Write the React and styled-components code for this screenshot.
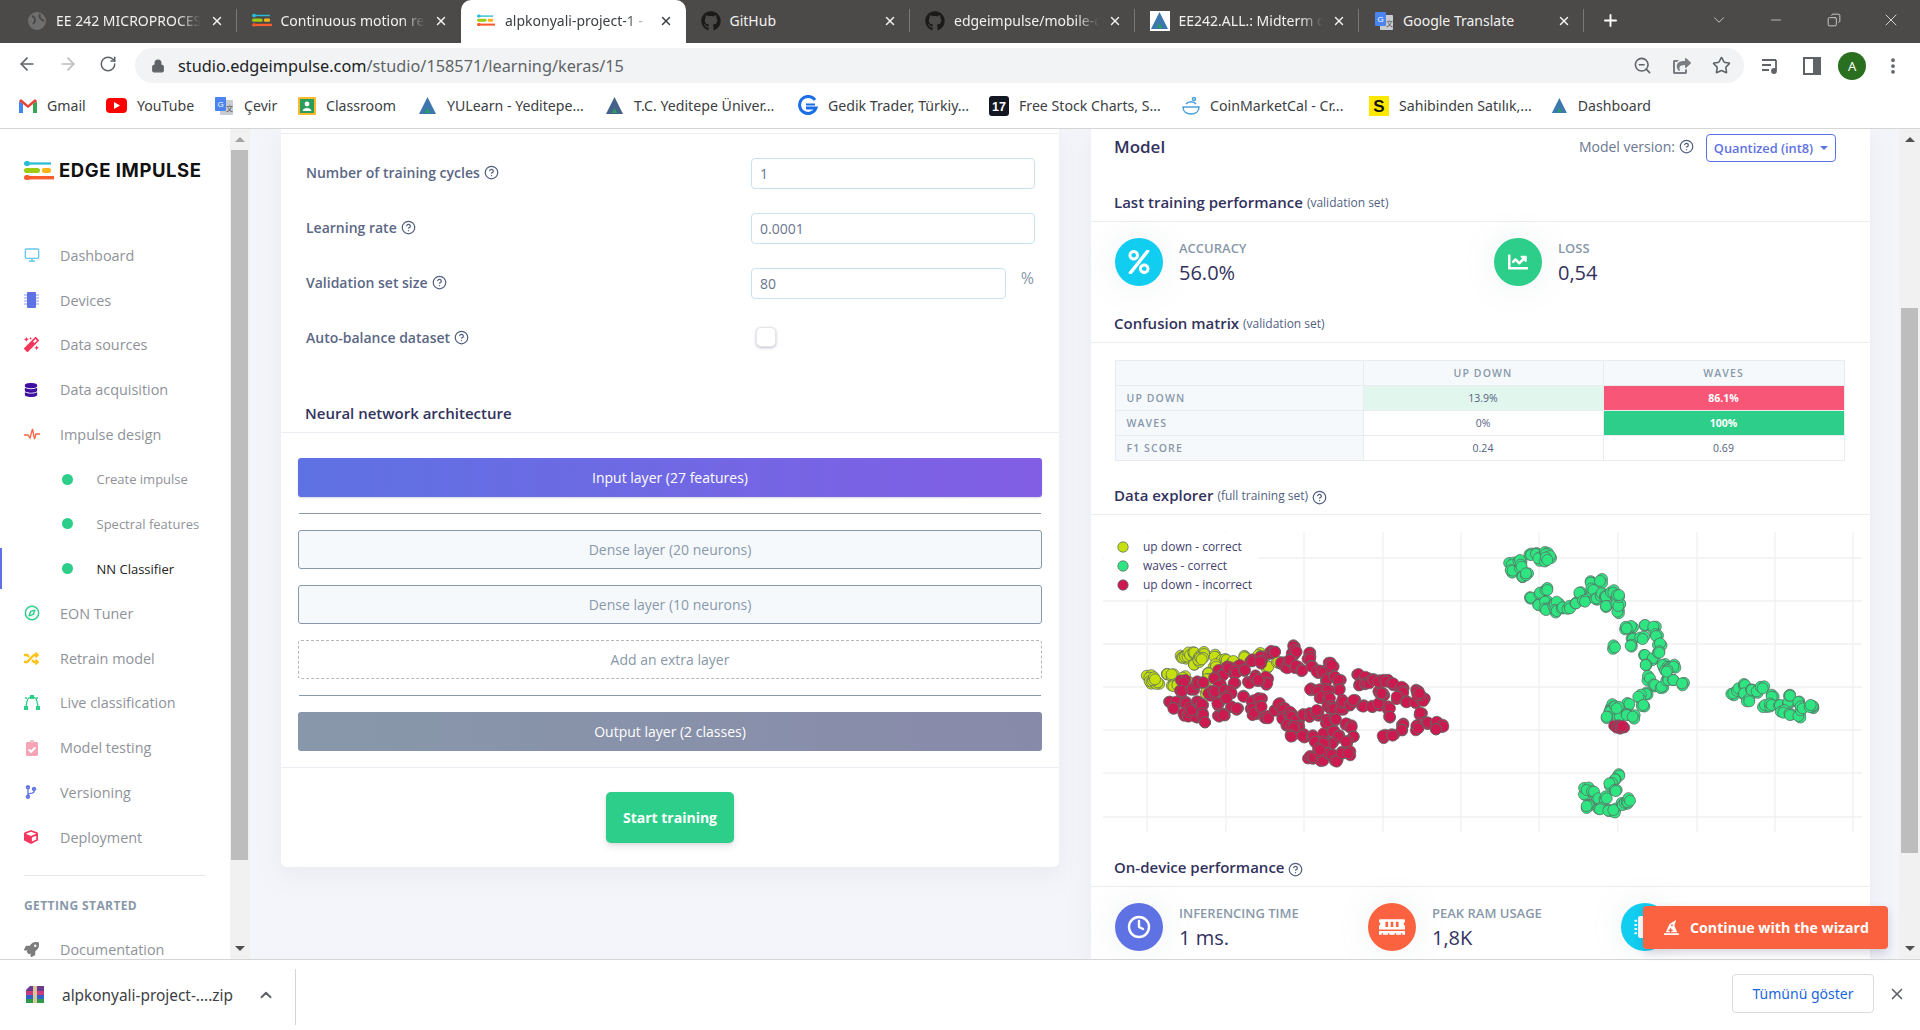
import React from 'react';
import styled, { createGlobalStyle } from 'styled-components';
import { ArrowLeft, ArrowRight, RotateCw, Lock, ZoomOut, Star, MoreVertical, X, Plus, ChevronDown, ChevronUp, Minus, Copy, Monitor, Clock, HelpCircle, Compass } from 'lucide-react';
import { FaDatabase, FaRandom, FaMagic, FaCodeBranch, FaClipboardCheck, FaCube, FaRocket, FaGithub, FaMicrochip, FaShareSquare, FaHatWizard, FaPercent, FaChartLine, FaMemory } from 'react-icons/fa';

const Global = createGlobalStyle`
  html, body { margin: 0; padding: 0; height: 100%; overflow: hidden; background: #fff; }
  body { font-family: "Open Sans", "Noto Sans", sans-serif; }
  * { box-sizing: border-box; }
`;

const Window = styled.div`
  width: 1920px; height: 1030px; display: flex; flex-direction: column; overflow: hidden; position: relative;
`;
const TabStrip = styled.div`
  height: 43px; flex: none; background: #4c4a48; display: flex; align-items: flex-end; padding-left: 12px; color: #fff;
  font-family: "Noto Sans", sans-serif; font-size: 14px;
`;
const Tab = styled.div`
  width: 224.5px; height: 43px; flex: none; display: flex; align-items: center; padding: 0 13px 2px 15px; gap: 9px;
  background: ${p => p.$active ? '#fff' : 'transparent'};
  color: ${p => p.$active ? '#3c4043' : '#f1f1f1'};
  border-radius: ${p => p.$active ? '10px 10px 0 0' : '0'};
  position: relative;
  &::after { content: ''; position: absolute; right: 0; top: 9px; bottom: 11px; width: 1px; background: ${p => p.$sep ? '#7a7876' : 'transparent'}; }
`;
const TabIcon = styled.span`
  width: 20px; height: 20px; flex: none; display: flex; align-items: center; justify-content: center; background: ${p => p.$plate ? '#fff' : 'transparent'};
`;
const TabLabel = styled.span`
  flex: 1; min-width: 0; white-space: nowrap;
  ${p => !p.$plain && `
    -webkit-mask-image: linear-gradient(90deg, #000 84%, transparent 100%);
    mask-image: linear-gradient(90deg, #000 84%, transparent 100%);
  `}
`;
const NewTab = styled.div`
  margin-left: 17px; height: 43px; display: flex; align-items: center; padding-bottom: 2px;
`;
const WindowControls = styled.div`
  margin-left: auto; display: flex; align-items: center; height: 43px; padding-bottom: 4px; color: #ececec; gap: 0;
`;
const WinBtn = styled.span`
  width: 57.5px; display: flex; justify-content: center;
`;
const ToolBar = styled.div`
  height: 42px; flex: none; background: #fff; display: flex; align-items: center; padding: 0 0 0 17px; color: #5f6368;
`;
const NavBtn = styled.span`
  width: ${p => p.$w || 41}px; flex: none; display: flex; justify-content: ${p => p.$c ? 'center' : 'flex-start'}; color: ${p => p.$dim ? '#b9bbbe' : '#5f6368'};
`;
const Omnibox = styled.div`
  width: 1609px; height: 35px; margin: 3px 0 0 17px; flex: none; background: #f1f3f4; border-radius: 18px; display: flex; align-items: center; padding: 0 13px 0 16px;
  font-family: "Noto Sans", sans-serif; font-size: 16.3px; color: #5f6368;
`;
const Url = styled.span`
  flex: 1; margin-left: 13px; b { font-weight: 400; color: #202124; }
`;
const OmniIcons = styled.div`
  display: flex; gap: 21px; align-items: center; color: #5f6368;
`;
const ToolEnd = styled.div`
  flex: 1; display: grid; grid-template-columns: repeat(4, 40.7px); justify-items: center; align-items: center; padding: 3px 0 0 6.5px;
`;
const Avatar = styled.span`
  width: 28px; height: 28px; border-radius: 50%; background: #2a6f1f; color: #fff; display: flex; align-items: center; justify-content: center;
  font-family: "Noto Sans", sans-serif; font-size: 13px;
`;
const BookmarkBar = styled.div`
  height: 44px; flex: none; background: #fff; border-bottom: 1px solid #d5d5d5; display: flex; align-items: center; padding: 0 0 2px 19px;
`;
const Bookmark = styled.div`
  width: ${p => p.$w}px; flex: none; display: flex; align-items: center; gap: 10px; font-family: "Noto Sans", sans-serif; font-size: 14.15px; color: #3c4043; white-space: nowrap;
`;
const Viewport = styled.div`
  flex: 1; min-height: 0; display: flex; position: relative; background: #f4f5fa;
`;
const Sidebar = styled.aside`
  width: 230px; flex: none; background: #fff; overflow: hidden; padding-top: 29px; position: relative;
`;
const Brand = styled.div`
  display: flex; align-items: center; gap: 5px; padding-left: 24px; height: 24px; margin-bottom: 51px;
`;
const BrandText = styled.span`
  font-family: "Inter", sans-serif; font-weight: 700; font-size: 18.5px; letter-spacing: 0.55px; color: #111;
`;
const NavItem = styled.div`
  height: ${p => p.$tail ? 20 : 44.75}px; display: flex; align-items: center; padding-left: ${p => p.$sub ? 61.5 : 24}px; gap: ${p => p.$sub ? 24 : 0}px;
  font-size: ${p => p.$sub ? 13 : 14.4}px; color: ${p => p.$active ? '#222' : '#8f9299'}; position: relative;
  &::before { content: ''; display: ${p => p.$active ? 'block' : 'none'}; position: absolute; left: 0; top: 2px; bottom: 2px; width: 2px; background: #5e72e4; }
`;
const NavIcon = styled.span`
  width: 36px; flex: none; display: flex; align-items: center; color: ${p => p.$c}; font-size: 15px;
`;
const SubDot = styled.span`
  width: 11px; height: 11px; border-radius: 50%; background: #2dce89; flex: none;
`;
const NavDivider = styled.div`
  height: 1px; background: #e6e6e8; margin: 15px 24px 0 24px;
`;
const NavHeading = styled.div`
  font-size: 12px; font-weight: 700; letter-spacing: 0.4px; color: #8898aa; padding: 22px 0 26px 24px; line-height: 16px;
`;
const Track = styled.div`
  width: ${p => p.$w}px; flex: none; background: #f1f1f1; display: flex; flex-direction: column; align-items: center; padding: 0 2px 0 ${p => p.$pl}px;
`;
const ScrollArrow = styled.div`
  height: 21px; width: 100%; flex: none; display: flex; align-items: center; justify-content: center;
  &::before { content: ''; border-left: 5px solid transparent; border-right: 5px solid transparent; ${p => p.$down ? 'border-top: 5px solid #505050;' : `border-bottom: 5px solid ${p.$dark ? '#505050' : '#a3a3a3'};`} }
`;
const Thumb = styled.div`
  width: 100%; height: ${p => p.$h}px; margin-top: ${p => p.$top}px; flex: none; background: #bdbdbd;
`;
const TrackGap = styled.div`flex: 1;`;
const Content = styled.main`
  flex: 1; min-width: 0; overflow: hidden; display: grid; grid-template-columns: 778px 779px; column-gap: 32px; align-items: start; padding-left: 31px;
  color: #525f7f;
`;
const Card = styled.section`
  background: #fff; border-radius: 0 0 6px 6px; box-shadow: 0 8px 24px rgba(140,152,164,.10);
`;
const CardLead = styled.div`
  height: 5px; border-bottom: 1px solid #ebedf2;
`;
const Form = styled.div`
  padding: 24px 25px 0 25px; display: flex; flex-direction: column; gap: 24px;
`;
const FormRow = styled.div`
  display: grid; grid-template-columns: 445px 1fr; align-items: center; height: 31px;
`;
const FieldLabel = styled.label`
  font-size: 14px; font-weight: 600; color: #5b6785; display: flex; align-items: center; gap: 4px; margin-top: -2px;
`;
const Help = styled(HelpCircle)`
  flex: none; color: #525f7f;
`;
const InputWrap = styled.div`
  display: flex; align-items: flex-start; justify-content: space-between;
`;
const TextInput = styled.div`
  width: ${p => p.$w || 284}px; height: 31px; border: 1px solid #c9e2f3; border-radius: 4px; padding: 0 8px; display: flex; align-items: center; font-size: 14px; color: #6b7690; background: #fff;
`;
const Unit = styled.span`
  font-size: 16px; color: #8898aa; margin: -1px 0 0 0;
`;
const CheckBox = styled.div`
  width: 20px; height: 20px; margin: -4px 0 0 5px; border-radius: 5px; background: #fff; border: 1px solid #e4e6ea; box-shadow: 0 1px 3px rgba(50,50,93,.3);
`;
const SectionHead = styled.div`
  height: ${p => p.$h}px; display: flex; align-items: flex-end; gap: 4px; padding: 0 25px 9px ${p => p.$pl || 23}px; border-bottom: 1px solid #ebedf2; line-height: 20px;
  font-size: 15px; font-weight: 600; color: #32325d;
`;
const Note = styled.small`
  font-size: 12px; font-weight: 400; color: #525f7f; line-height: 20px; margin-bottom: -1px;
`;
const Layers = styled.div`
  padding: 25px 17px 16px 17px; display: flex; flex-direction: column; gap: 16px; border-bottom: 1px solid #ebedf2;
`;
const Layer = styled.div`
  height: 39px; border-radius: 3px; display: flex; align-items: center; justify-content: center; font-size: 14px;
  ${p => p.$kind === 'input' && 'background: linear-gradient(87deg, #5e72e4, #825ee4); color: #fff; font-weight: 500; box-shadow: 0 1px 2px rgba(50,50,93,.2);'}
  ${p => p.$kind === 'output' && 'background: linear-gradient(87deg, #8898aa, #888aaa); color: #fff; font-weight: 500;'}
  ${p => p.$kind === 'dense' && 'background: #f6f9fc; border: 1px solid #8898aa; color: #8898aa;'}
  ${p => p.$kind === 'add' && 'background: #fff; border: 1px dashed #b5b8bd; color: #8898aa;'}
`;
const Rule = styled.hr`
  margin: 0 1px; border: 0; height: 1px; background: #8898aa;
`;
const Actions = styled.div`
  display: flex; justify-content: center; padding: 24px 0;
`;
const StartButton = styled.button`
  width: 128px; height: 51px; border: 0; border-radius: 5px; background: #2dce89; color: #fff; font: 700 14px "Open Sans", sans-serif; box-shadow: 0 4px 6px rgba(50,50,93,.11), 0 1px 3px rgba(0,0,0,.08);
`;
const ModelHead = styled.div`
  height: 33px; padding: 5px 34px 0 23px; display: flex; align-items: center; justify-content: space-between;
`;
const ModelTitle = styled.h2`
  margin: -2px 0 0 0; font-size: 17px; font-weight: 600; color: #32325d; line-height: 28px;
`;
const VersionGroup = styled.div`
  display: flex; align-items: center; gap: 4px; font-size: 14px; color: #6b7690;
`;
const VersionText = styled.span`
  display: flex; align-items: center; gap: 4px; margin-top: -3px;
`;
const VersionSelect = styled.div`
  width: 130px; height: 28px; margin-left: 8px; border: 1px solid #5e72e4; border-radius: 4px; color: #5e72e4; font-size: 12.8px; font-weight: 600; display: flex; align-items: center; justify-content: center; gap: 7px;
  &::after { content: ''; border-left: 4px solid transparent; border-right: 4px solid transparent; border-top: 4.5px solid #5e72e4; }
`;
const StatRow = styled.div`
  display: grid; grid-template-columns: ${p => p.$cols}; padding: 16px 0 ${p => p.$pb || 0}px 24px;
`;
const Stat = styled.div`
  display: flex; gap: 15px; align-items: center; height: 48px;
`;
const StatIcon = styled.span`
  width: 48px; height: 48px; border-radius: 50%; background: ${p => p.$c}; color: #fff; flex: none; display: flex; align-items: center; justify-content: center; box-shadow: 0 0 32px rgba(136,152,170,.15);
`;
const StatText = styled.div`
  display: flex; flex-direction: column; gap: 1px; padding: 1px 0 0 1px;
`;
const StatLabel = styled.span`
  font-size: 13px; font-weight: 600; color: #8898aa; line-height: 19px; white-space: nowrap;
`;
const StatValue = styled.span`
  font-size: 20px; font-weight: 500; color: #32325d; line-height: 28px;
`;
const Matrix = styled.table`
  width: 729px; margin: 17px 0 0 23.5px; border-collapse: collapse; table-layout: fixed; font-size: 10.5px; color: #525f7f;
  td, th { border: 1px solid #e9ecef; height: 25px; padding: 0; text-align: center; font-weight: 400; }
`;
const MatrixHead = styled.th`
  background: #f6f9fc; color: #8898aa; letter-spacing: 1.1px; text-align: ${p => p.$left ? 'left' : 'center'} !important; padding-left: ${p => p.$left ? 11 : 0}px !important;
  font-weight: 600 !important; font-size: 10.5px;
`;
const Cell = styled.td`
  background: ${p => p.$bg || '#fff'}; color: ${p => p.$fg || '#525f7f'}; font-weight: ${p => p.$fg ? 700 : 400} !important;
`;
const Plot = styled.svg`
  display: block; width: 779px; height: 335px;
`;
const LegendText = styled.text`
  font: 12px "Open Sans", sans-serif; fill: #44446e;
`;
const Wizard = styled.div`
  position: absolute; left: 1643px; top: 777px; width: 245px; height: 43px; border-radius: 4px; background: #fb6340; color: #fff; display: flex; align-items: center; gap: 11px; padding-left: 21px; font-size: 14.2px; font-weight: 700; box-shadow: 0 4px 10px rgba(50,50,93,.2); white-space: nowrap;
`;
const Shelf = styled.footer`
  height: 71px; flex: none; background: #fff; border-top: 1px solid #d5d5d5; display: flex; align-items: center; padding-left: 25px; font-family: "Noto Sans", sans-serif; font-size: 15.4px; color: #3c4043;
`;
const ShelfFile = styled.span`
  margin-left: 17px; width: 195px; white-space: nowrap;
`;
const ShelfDivider = styled.span`
  width: 1px; height: 56px; background: #d5d5d5; margin: 4px 0 0 20px;
`;
const ShowAll = styled.div`
  margin-left: auto; width: 142px; height: 39px; margin-bottom: 4px; border: 1px solid #dadce0; border-radius: 4px; display: flex; align-items: center; justify-content: center; color: #1a66e0; font-size: 14px;
`;
const ShelfClose = styled.span`
  width: 46px; flex: none; display: flex; justify-content: center; color: #5f6368; margin-bottom: 2px;
`;

const EILogo = ({ s = 1 }) => (
  <svg width={30 * s} height={21 * s} viewBox="0 0 30 21">
    <rect x="0" y="1" width="6" height="5" rx="2.5" fill="#27bcd6" /><rect x="3" y="2.4" width="24" height="2.2" fill="#27bcd6" />
    <rect x="0" y="8" width="16" height="5" rx="2.5" fill="#9ccb0f" /><rect x="18" y="8" width="9" height="5" rx="2" fill="#fcb316" />
    <rect x="0" y="15" width="6" height="5" rx="2.5" fill="#fb5a2c" /><rect x="3" y="16" width="27" height="3.4" fill="#fb5a2c" />
  </svg>
);
const Triangle = ({ c = '#3c78ae' }) => (
  <svg width="19" height="20" viewBox="0 0 19 20">
    <path d="M9.5 1 L18 18 H1 Z" fill={c} /><path d="M9.5 12 L12 17 H7 Z" fill="#27a25a" />
  </svg>
);
const Translate = () => (
  <svg width="20" height="20" viewBox="0 0 20 20">
    <rect x="6" y="4" width="13" height="15" rx="1" fill="#c9ccd1" /><rect x="1" y="1" width="11" height="14" rx="1" fill="#4b84ee" />
    <text x="3.5" y="11" fontSize="8" fill="#fff" fontFamily="Liberation Sans">G</text><text x="12" y="15" fontSize="7" fill="#555" fontFamily="Noto Sans CJK JP">文</text>
  </svg>
);
const Gmail = () => (
  <svg width="18" height="14" viewBox="0 0 18 14">
    <path d="M0 2 V14 H4 V5 Z" fill="#4285f4" /><path d="M18 2 V14 H14 V5 Z" fill="#34a853" /><path d="M0 2 L2 0 L9 6 L16 0 L18 2 L9 9 Z" fill="#ea4335" />
  </svg>
);
const Youtube = () => (
  <svg width="21" height="15" viewBox="0 0 21 15"><rect width="21" height="15" rx="4" fill="#f00" /><path d="M8 4 L14 7.5 L8 11 Z" fill="#fff" /></svg>
);
const Classroom = () => (
  <svg width="18" height="18" viewBox="0 0 18 18"><rect width="18" height="18" rx="1" fill="#f9bb2d" /><rect x="2" y="2" width="14" height="14" fill="#2a9d5c" /><circle cx="9" cy="7" r="2.4" fill="#fff" /><path d="M4.5 14 C5 10 13 10 13.500 14 Z" fill="#fff" /></svg>
);
const GLogo = () => (
  <svg width="20" height="21" viewBox="0 0 20 21" fill="none" stroke="#1a6ee8" strokeWidth="3"><path d="M17 5 A8.500 8.500 0 1 0 18 13 H8" /><path d="M8 9.500 H17" strokeWidth="2" /></svg>
);
const TvLogo = () => (
  <svg width="20" height="20" viewBox="0 0 20 20"><rect width="20" height="20" rx="3" fill="#131722" /><text x="10" y="15" textAnchor="middle" fontSize="12.500" fontWeight="700" fill="#fff" fontFamily="Liberation Sans">17</text></svg>
);
const CoinCal = () => (
  <svg width="18" height="19" viewBox="0 0 18 19" fill="none" stroke="#4d9fd8" strokeWidth="1.500"><path d="M1 11 H17 C17 16 13 18 9 18 C5 18 1 16 1 11 Z" /><path d="M4 8 C6 5 12 5 14 8" /><circle cx="12" cy="3" r="1.500" /></svg>
);
const SLogo = () => (
  <svg width="20" height="20" viewBox="0 0 20 20"><rect width="20" height="20" fill="#ffe800" /><text x="10" y="16" textAnchor="middle" fontSize="17" fontWeight="700" fill="#111" fontFamily="Liberation Sans">S</text></svg>
);
const Rar = () => (
  <svg width="20" height="20" viewBox="0 0 20 20"><path d="M1 5 L5 1 H19 V6 H1 Z" fill="#6a3a8e" /><rect x="1" y="6" width="18" height="4" fill="#c83a7c" /><rect x="1" y="10" width="18" height="4" fill="#2f62c8" /><rect x="1" y="14" width="18" height="4" fill="#2f9a4a" /><rect x="8" y="1" width="4" height="17" fill="#d8c79a" /></svg>
);

const tabs = [
  { icon: <svg width="18" height="18" viewBox="0 0 18 18"><circle cx="9" cy="9" r="9" fill="#6f6f6f" /><path d="M4 4 C8 6 8 9 5 12 M12 2 C10 6 14 8 16 9" stroke="#4c4a48" strokeWidth="2" fill="none" /></svg>, label: 'EE 242 MICROPROCES', sep: true },
  { icon: <EILogo s={0.68} />, label: 'Continuous motion re', sep: false },
  { icon: <EILogo s={0.6} />, label: 'alpkonyali-project-1 -', active: true },
  { icon: <FaGithub size={20} color="#1a1a1a" />, label: 'GitHub', sep: true, plain: true },
  { icon: <FaGithub size={20} color="#1a1a1a" />, label: 'edgeimpulse/mobile-c', sep: true },
  { icon: <Triangle />, label: 'EE242.ALL.: Midterm c', sep: true, plate: true },
  { icon: <Translate />, label: 'Google Translate', sep: true, plain: true },
];
const bookmarks = [
  [<Gmail />, 'Gmail', 87], [<Youtube />, 'YouTube', 108], [<Translate />, 'Çevir', 84], [<Classroom />, 'Classroom', 120],
  [<Triangle />, 'YULearn - Yeditepe...', 187], [<Triangle c="#44618a" />, 'T.C. Yeditepe Üniver...', 193], [<GLogo />, 'Gedik Trader, Türkiy...', 191],
  [<TvLogo />, 'Free Stock Charts, S...', 193], [<CoinCal />, 'CoinMarketCal - Cr...', 187], [<SLogo />, 'Sahibinden Satılık,...', 182], [<Triangle />, 'Dashboard', 100],
];
const Chip = () => (
  <svg width="15" height="16" viewBox="0 0 15 16"><rect x="3" y="0" width="9" height="16" rx="1" fill="#5e72e4" /><path d="M0 3 H3 M0 6 H3 M0 9 H3 M0 12 H3 M12 3 H15 M12 6 H15 M12 9 H15 M12 12 H15" stroke="#8e9bec" strokeWidth="1" /></svg>
);
const Pulse = () => (
  <svg width="16" height="12" viewBox="0 0 16 12" fill="none" stroke="#fb6340" strokeWidth="1.300"><path d="M0 7 H4 L6 10 L8.500 1 L10.500 11 L12 6 H16" /></svg>
);
const Spline = () => (
  <svg width="16" height="15" viewBox="0 0 16 15" fill="none" stroke="#2dce89" strokeWidth="1.300"><path d="M2 12 C3 3 5 2 8 2 C11 2 13 3 14 12" /><path d="M1 3 H15" strokeDasharray="2 9" /><rect x="0" y="11" width="4" height="4" fill="#2dce89" stroke="none" /><rect x="12" y="11" width="4" height="4" fill="#2dce89" stroke="none" /><rect x="6" y="0" width="4" height="4" fill="#2dce89" stroke="none" /></svg>
);
const navTop = [
  [<Monitor size={16} />, '#65c8f0', 'Dashboard'], [<Chip />, '#5e72e4', 'Devices'], [<FaMagic size={15} />, '#f5365c', 'Data sources'],
  [<FaDatabase size={14} />, '#3f0f9f', 'Data acquisition'], [<Pulse />, '#fb6340', 'Impulse design'],
];
const navBottom = [
  [<Compass size={16} strokeWidth={2.2} />, '#2dce89', 'EON Tuner'], [<FaRandom size={15} />, '#fcc419', 'Retrain model'], [<Spline />, '#2dce89', 'Live classification'],
  [<FaClipboardCheck size={16} />, '#f6a4b5', 'Model testing'], [<FaCodeBranch size={14} />, '#5e72e4', 'Versioning'], [<FaCube size={14} />, '#f5365c', 'Deployment'],
];

const yellow = [[178,473],[185,485],[203,487],[195,478],[232,462],[245,463],[250,498],[262,495],[278,473],[275,413],[285,410],[300,405],[313,398],[328,410],[342,402],[312,434],[325,420],[335,418],[374,410],[395,420],[410,420],[430,423],[378,440],[355,460],[350,478],[395,470],[463,412],[505,405],[535,440],[565,425],[350,512],[300,490],[535,400]];
const crimson = [[280,487],[276,513],[308,505],[325,490],[340,487],[385,450],[400,465],[372,475],[385,498],[415,445],[450,435],[440,458],[465,450],[432,488],[487,424],[512,410],[510,425],[478,490],[495,472],[527,470],[532,490],[505,480],[545,400],[555,396],[573,428],[592,445],[610,380],[605,400],[620,395],[600,420],[618,437],[637,452],[658,398],[660,418],[665,440],[680,455],[700,458],[722,428],[725,435],[712,480],[735,470],[745,480],[748,510],[660,508],[685,515],[712,512],[695,530],[720,535],[240,545],[258,545],[288,550],[250,565],[280,580],[295,590],[315,590],[305,570],[325,545],[335,552],[340,585],[345,607],[382,550],[388,590],[400,585],[355,520],[375,515],[405,510],[425,520],[425,560],[440,565],[410,535],[460,530],[485,545],[510,540],[488,565],[492,578],[515,560],[525,590],[535,595],[555,572],[565,552],[580,570],[577,597],[600,575],[605,590],[592,615],[620,600],[640,585],[625,620],[610,625],[603,650],[637,648],[665,585],[685,583],[680,570],[670,650],[675,665],[700,640],[730,635],[745,650],[720,565],[733,567],[755,565],[760,545],[780,555],[790,540],[820,560],[845,560],[865,550],[868,520],[880,520],[715,605],[738,598],[768,610],[785,622],[790,650],[768,665],[725,672],[700,670],[660,708],[672,712],[695,695],[700,722],[715,700],[725,705],[740,725],[755,700],[775,700],[690,690],[806,462],[825,470],[810,495],[825,490],[838,490],[850,480],[865,485],[888,485],[910,490],[935,500],[940,518],[875,520],[920,530],[950,547],[975,547],[1000,543],[980,515],[988,520],[900,565],[900,590],[990,578],[940,615],[935,630],[878,647],[908,647],[980,620],[985,625],[1015,608],[1040,605],[1060,620],[1038,628]];
const green = [[125,105],[128,122],[150,90],[155,110],[158,140],[168,130],[183,75],[198,72],[205,85],[228,72],[240,78],[232,90],[183,203],[210,188],[232,180],[205,225],[225,215],[228,240],[250,228],[260,215],[260,243],[278,232],[300,235],[318,220],[328,188],[345,215],[362,158],[390,153],[370,180],[380,205],[395,190],[408,200],[408,228],[430,188],[440,210],[442,245],[445,228],[447,195],[483,288],[470,295],[525,285],[550,290],[488,327],[482,347],[518,327],[558,318],[570,340],[435,352],[525,375],[548,385],[568,368],[527,405],[578,405],[595,415],[610,410],[540,445],[555,465],[575,470],[595,450],[610,450],[636,460],[590,425],[528,492],[505,500],[478,522],[520,525],[430,530],[420,545],[410,560],[450,560],[470,555],[488,560],[440,535],[790,490],[805,475],[825,465],[822,490],[838,514],[845,480],[860,484],[878,475],[905,500],[885,525],[905,525],[930,525],[955,515],[960,497],[985,516],[940,548],[960,555],[985,558],[998,535],[1030,530],[1022,525],[448,737],[435,748],[418,760],[437,783],[342,793],[350,780],[372,785],[385,805],[410,805],[358,825],[350,828],[390,838],[415,842],[430,840],[458,825],[470,815],[480,812]];
const crimson2 = [[440,593],[452,590],[458,588]];

const gridX = [1147, 1226, 1304, 1383, 1461, 1539, 1618, 1697, 1775, 1853];
const gridY = [558, 601, 644, 687, 730, 773, 817];

const Dots = ({ pts, ox, oy, fill }) => pts.flatMap(([x, y], i) => {
  const jx = ((i * 37) % 11 - 5) * 0.5, jy = ((i * 53) % 9 - 4) * 0.5;
  return [[x / 3 + ox + jx, y / 3 + oy + jy], [x / 3 + ox - jy, y / 3 + oy + jx], [x / 3 + ox, y / 3 + oy]];
}).map(([cx, cy], i) => <circle key={i} cx={cx} cy={cy} r="5.5" fill={fill} stroke="#5b6b66" strokeOpacity=".75" strokeWidth="1" />);

const Explorer = () => (
  <Plot viewBox="1091 515 779 335">
    {gridX.map(x => <line key={x} x1={x} x2={x} y1="532" y2="832" stroke="#f0f0f1" strokeWidth="1.300" />)}
    {gridY.map(y => <line key={y} y1={y} y2={y} x1="1103" x2="1862" stroke="#f0f0f1" strokeWidth="1.300" />)}
    <rect x="1104" y="533" width="154" height="66" fill="#fff" />
    <Dots pts={yellow} ox={1090} oy={520} fill="#c6e00e" />
    <Dots pts={green} ox={1470} oy={530} fill="#2fe582" />
    <Dots pts={crimson} ox={1090} oy={520} fill="#cc1a50" />
    <Dots pts={crimson2} ox={1470} oy={530} fill="#cc1a50" />
    {[[547, '#c6e00e', 'up down - correct'], [566, '#2fe582', 'waves - correct'], [585, '#cc1a50', 'up down - incorrect']].map(([y, c, t]) => (
      <g key={t}>
        <circle cx="1123" cy={y} r="5.200" fill={c} stroke="#5b6b66" strokeOpacity=".75" />
        <LegendText x="1143" y={y + 4}>{t}</LegendText>
      </g>
    ))}
  </Plot>
);

export default function App() {
  return (
    <Window>
      <Global />
      <TabStrip>
        {tabs.map(t => (
          <Tab key={t.label} $active={t.active} $sep={t.sep}>
            <TabIcon $plate={t.plate}>{t.icon}</TabIcon>
            <TabLabel $plain={t.plain}>{t.label}</TabLabel>
            <X size={14} strokeWidth={2.5} />
          </Tab>
        ))}
        <NewTab><Plus size={19} strokeWidth={2.4} /></NewTab>
        <WindowControls>
          <WinBtn><ChevronDown size={18} strokeWidth={1} /></WinBtn>
          <WinBtn><Minus size={16} strokeWidth={1} /></WinBtn>
          <WinBtn><Copy size={14} strokeWidth={1.300} style={{ transform: 'scaleX(-1)' }} /></WinBtn>
          <WinBtn><X size={20} strokeWidth={1} /></WinBtn>
        </WindowControls>
      </TabStrip>
      <ToolBar>
        <NavBtn><ArrowLeft size={20} /></NavBtn>
        <NavBtn $dim><ArrowRight size={20} /></NavBtn>
        <NavBtn $w={19}><RotateCw size={18} /></NavBtn>
        <Omnibox>
          <Lock size={14} fill="#5f6368" />
          <Url><b>studio.edgeimpulse.com</b>/studio/158571/learning/keras/15</Url>
          <OmniIcons>
            <ZoomOut size={19} />
            <FaShareSquare size={18} color="#7a7d82" />
            <Star size={19} />
          </OmniIcons>
        </Omnibox>
        <ToolEnd>
          <NavBtn $w={20} $c><svg width="20" height="20" viewBox="0 0 20 20" fill="none" stroke="#5f6368" strokeWidth="1.800"><path d="M1 4 H15 M1 9 H10 M1 14 H8" /><path d="M15 4 V14" /><circle cx="13" cy="15" r="2" fill="#5f6368" /></svg></NavBtn>
          <NavBtn $w={20} $c><svg width="18" height="18" viewBox="0 0 18 18"><rect x="1" y="1" width="16" height="16" fill="none" stroke="#5f6368" strokeWidth="2" /><rect x="10" y="1" width="7" height="16" fill="#5f6368" /></svg></NavBtn>
          <Avatar>A</Avatar>
          <NavBtn $w={20} $c><MoreVertical size={20} strokeWidth={2.5} /></NavBtn>
        </ToolEnd>
      </ToolBar>
      <BookmarkBar>
        {bookmarks.map(([icon, label, w]) => (
          <Bookmark key={label} $w={w}>{icon}<span>{label}</span></Bookmark>
        ))}
      </BookmarkBar>
      <Viewport>
        <Sidebar>
          <Brand><EILogo /><BrandText>EDGE IMPULSE</BrandText></Brand>
          {navTop.map(([icon, c, t]) => <NavItem key={t}><NavIcon $c={c}>{icon}</NavIcon>{t}</NavItem>)}
          <NavItem $sub><SubDot />Create impulse</NavItem>
          <NavItem $sub><SubDot />Spectral features</NavItem>
          <NavItem $sub $active><SubDot />NN Classifier</NavItem>
          {navBottom.map(([icon, c, t]) => <NavItem key={t}><NavIcon $c={c}>{icon}</NavIcon>{t}</NavItem>)}
          <NavDivider />
          <NavHeading>GETTING STARTED</NavHeading>
          <NavItem $tail><NavIcon $c="#7d7d7d"><FaRocket size={15} /></NavIcon>Documentation</NavItem>
        </Sidebar>
        <Track $w={20} $pl={1}>
          <ScrollArrow />
          <Thumb $top={0} $h={710} />
          <TrackGap />
          <ScrollArrow $down />
        </Track>
        <Content>
          <Card>
            <CardLead />
            <Form>
              <FormRow>
                <FieldLabel>Number of training cycles <Help size={15} /></FieldLabel>
                <InputWrap><TextInput>1</TextInput></InputWrap>
              </FormRow>
              <FormRow>
                <FieldLabel>Learning rate <Help size={15} /></FieldLabel>
                <InputWrap><TextInput>0.0001</TextInput></InputWrap>
              </FormRow>
              <FormRow>
                <FieldLabel>Validation set size <Help size={15} /></FieldLabel>
                <InputWrap><TextInput $w={255}>80</TextInput><Unit>%</Unit></InputWrap>
              </FormRow>
              <FormRow>
                <FieldLabel>Auto-balance dataset <Help size={15} /></FieldLabel>
                <InputWrap><CheckBox /></InputWrap>
              </FormRow>
            </Form>
            <SectionHead $h={79} $pl={24}>Neural network architecture</SectionHead>
            <Layers>
              <Layer $kind="input">Input layer (27 features)</Layer>
              <Rule />
              <Layer $kind="dense">Dense layer (20 neurons)</Layer>
              <Layer $kind="dense">Dense layer (10 neurons)</Layer>
              <Layer $kind="add">Add an extra layer</Layer>
              <Rule />
              <Layer $kind="output">Output layer (2 classes)</Layer>
            </Layers>
            <Actions><StartButton>Start training</StartButton></Actions>
          </Card>
          <Card>
            <ModelHead>
              <ModelTitle>Model</ModelTitle>
              <VersionGroup><VersionText>Model version: <Help size={15} /></VersionText><VersionSelect>Quantized (int8)</VersionSelect></VersionGroup>
            </ModelHead>
            <SectionHead $h={60}>Last training performance <Note>(validation set)</Note></SectionHead>
            <StatRow $cols="379px 1fr">
              <Stat><StatIcon $c="#11cdef"><FaPercent size={24} /></StatIcon><StatText><StatLabel>ACCURACY</StatLabel><StatValue>56.0%</StatValue></StatText></Stat>
              <Stat><StatIcon $c="#2dce89"><FaChartLine size={20} /></StatIcon><StatText><StatLabel>LOSS</StatLabel><StatValue>0,54</StatValue></StatText></Stat>
            </StatRow>
            <SectionHead $h={57}>Confusion matrix <Note>(validation set)</Note></SectionHead>
            <Matrix>
              <colgroup><col style={{ width: 248 }} /><col style={{ width: 240 }} /><col style={{ width: 241 }} /></colgroup>
              <thead><tr><MatrixHead /><MatrixHead>UP DOWN</MatrixHead><MatrixHead>WAVES</MatrixHead></tr></thead>
              <tbody>
                <tr><MatrixHead $left>UP DOWN</MatrixHead><Cell $bg="#e1f6ed">13.9%</Cell><Cell $bg="#f75676" $fg="#fff">86.1%</Cell></tr>
                <tr><MatrixHead $left>WAVES</MatrixHead><Cell>0%</Cell><Cell $bg="#2dce89" $fg="#fff">100%</Cell></tr>
                <tr><MatrixHead $left>F1 SCORE</MatrixHead><Cell>0.24</Cell><Cell>0.69</Cell></tr>
              </tbody>
            </Matrix>
            <SectionHead $h={54}>Data explorer <Note>(full training set)</Note> <Help size={15} /></SectionHead>
            <Explorer />
            <SectionHead $h={37}>On-device performance <Help size={15} /></SectionHead>
            <StatRow $cols="253px 253px 1fr" $pb={16}>
              <Stat><StatIcon $c="#5e72e4"><Clock size={24} strokeWidth={2.4} /></StatIcon><StatText><StatLabel>INFERENCING TIME</StatLabel><StatValue>1 ms.</StatValue></StatText></Stat>
              <Stat><StatIcon $c="#fb6340"><FaMemory size={26} /></StatIcon><StatText><StatLabel>PEAK RAM USAGE</StatLabel><StatValue>1,8K</StatValue></StatText></Stat>
              <Stat><StatIcon $c="#11cdef"><FaMicrochip size={22} /></StatIcon></Stat>
            </StatRow>
          </Card>
        </Content>
        <Track $w={21} $pl={2}>
          <ScrollArrow $dark />
          <Thumb $top={158} $h={545} />
          <TrackGap />
          <ScrollArrow $down />
        </Track>
        <Wizard><FaHatWizard size={15} />Continue with the wizard</Wizard>
      </Viewport>
      <Shelf>
        <Rar />
        <ShelfFile>alpkonyali-project-....zip</ShelfFile>
        <ChevronUp size={18} color="#5f6368" strokeWidth={2.5} />
        <ShelfDivider />
        <ShowAll>Tümünü göster</ShowAll>
        <ShelfClose><X size={18} strokeWidth={2.2} /></ShelfClose>
      </Shelf>
    </Window>
  );
}
